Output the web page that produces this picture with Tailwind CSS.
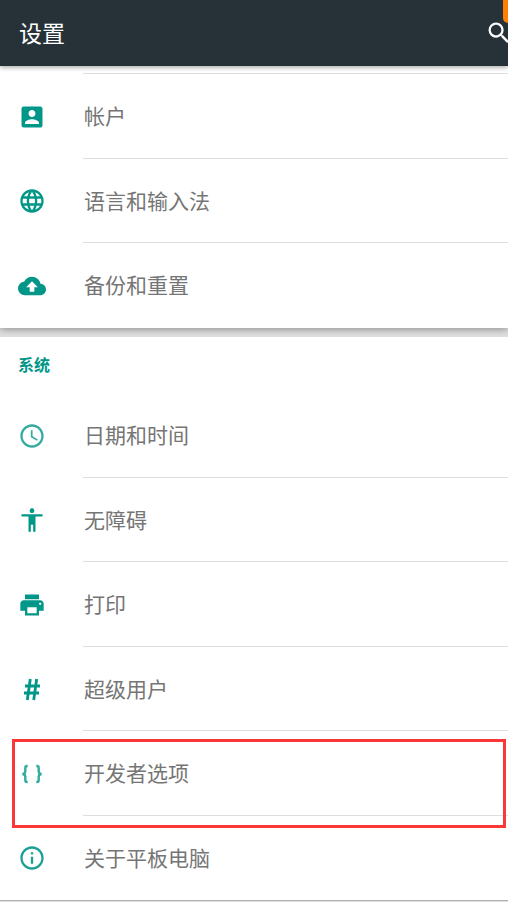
<!DOCTYPE html>
<html lang="zh-CN">
<head>
  <meta charset="UTF-8" />
  <meta name="viewport" content="width=device-width, initial-scale=1.0" />
  <title>设置</title>
  <script src="https://cdn.jsdelivr.net/npm/@tailwindcss/browser@4"></script>
</head>
<body class="bg-[#e0e0e0] font-['Noto_Sans_CJK_SC',sans-serif] text-[#757575] overflow-x-hidden">

  <!-- App bar -->
  <header class="relative z-10 h-[66px] flex items-center justify-between pl-[19px] bg-[#263238] shadow-[0_1px_5px_rgba(0,0,0,0.4)] overflow-x-clip">
    <h1 class="pb-[2px] text-[23px] leading-8 text-white">设置</h1>
    <button type="button" aria-label="搜索" class="-mr-[5px] shrink-0">
      <svg class="w-7 h-7 fill-white" viewBox="0 0 24 24"><path d="M15.500 14h-.79l-.28-.27A6.471 6.471 0 0 0 16 9.500 6.500 6.500 0 1 0 9.500 16c1.610 0 3.090-.59 4.230-1.570l.27.28v.79l5 4.990L20.490 19l-4.990-5zm-6 0C7.010 14 5 11.990 5 9.500S7.010 5 9.500 5 14 7.010 14 9.500 11.990 14 9.500 14z"/></svg>
    </button>
    <span class="absolute top-0 right-0 w-[5px] h-[23px] rounded-bl-[5px] bg-[#ff8000]"></span>
  </header>

  <main>
    <!-- Personal -->
    <section class="bg-white shadow-[0_1px_8px_rgba(0,0,0,0.4)]">
      <div class="h-2 ml-[83px] border-b border-[#dedede]"></div>
      <ul>
        <li class="odd:h-[85px] even:h-[84px]">
          <a href="#" class="h-full flex items-stretch pl-[18px]">
            <svg class="w-7 h-7 mr-[37px] self-center shrink-0 fill-[#009688]" viewBox="0 0 24 24"><path d="M3 5v14a2 2 0 0 0 2 2h14c1.100 0 2-.9 2-2V5c0-1.100-.9-2-2-2H5a2 2 0 0 0-2 2zm12 4c0 1.660-1.340 3-3 3s-3-1.340-3-3 1.340-3 3-3 3 1.340 3 3zm-9 8c0-2 4-3.100 6-3.100s6 1.100 6 3.100v1H6v-1z"/></svg>
            <span class="flex-1 flex items-center pl-px pb-[2px] border-b border-[#dedede] text-[21px] leading-7">帐户</span>
          </a>
        </li>
        <li class="odd:h-[85px] even:h-[84px]">
          <a href="#" class="h-full flex items-stretch pl-[18px]">
            <svg class="w-7 h-7 mr-[37px] self-center shrink-0 fill-[#009688]" viewBox="0 0 24 24"><path d="M11.990 2C6.470 2 2 6.480 2 12s4.470 10 9.990 10C17.520 22 22 17.520 22 12S17.520 2 11.990 2zm6.930 6h-2.950a15.650 15.650 0 0 0-1.380-3.560A8.030 8.030 0 0 1 18.920 8zM12 4.040c.83 1.200 1.480 2.530 1.910 3.960h-3.820c.43-1.430 1.080-2.760 1.910-3.960zM4.260 14C4.100 13.360 4 12.690 4 12s.1-1.360.26-2h3.380c-.08.66-.14 1.320-.14 2s.06 1.340.14 2H4.260zm.82 2h2.950c.32 1.250.78 2.450 1.380 3.560A7.987 7.987 0 0 1 5.080 16zm2.950-8H5.080a7.987 7.987 0 0 1 4.330-3.560A15.650 15.650 0 0 0 8.030 8zM12 19.960c-.83-1.200-1.480-2.530-1.910-3.960h3.820c-.43 1.430-1.080 2.760-1.910 3.960zM14.340 14H9.660c-.09-.66-.16-1.320-.16-2s.07-1.350.16-2h4.680c.09.65.16 1.320.16 2s-.07 1.340-.16 2zm.25 5.560c.6-1.110 1.060-2.310 1.380-3.560h2.950a8.030 8.030 0 0 1-4.330 3.560zM16.360 14c.08-.66.14-1.320.14-2s-.06-1.340-.14-2h3.380c.16.640.26 1.310.26 2s-.1 1.360-.26 2h-3.380z"/></svg>
            <span class="flex-1 flex items-center pl-px pb-[2px] border-b border-[#dedede] text-[21px] leading-7">语言和输入法</span>
          </a>
        </li>
        <li class="odd:h-[85px] even:h-[84px]">
          <a href="#" class="h-full flex items-stretch pl-[18px]">
            <svg class="w-7 h-7 mr-[37px] self-center shrink-0 fill-[#009688]" viewBox="0 0 24 24"><path d="M19.350 10.040A7.490 7.490 0 0 0 12 4C9.110 4 6.600 5.640 5.350 8.040A5.994 5.994 0 0 0 0 14c0 3.310 2.690 6 6 6h13c2.760 0 5-2.240 5-5 0-2.640-2.050-4.780-4.650-4.960zM14 13v4h-4v-4H7l5-5 5 5h-3z"/></svg>
            <span class="flex-1 flex items-center pl-px pb-[3px] text-[21px] leading-7">备份和重置</span>
          </a>
        </li>
      </ul>
    </section>

    <!-- System -->
    <section class="relative mt-[9px] bg-white border-b border-[#b0b0b0]">
      <h2 class="h-14 flex items-center pl-[18px] pb-[2px] text-base font-bold text-[#009688]">系统</h2>
      <ul>
        <li class="odd:h-[85px] even:h-[84px]">
          <a href="#" class="h-full flex items-stretch pl-[18px]">
            <svg class="w-7 h-7 mr-[37px] self-center shrink-0 fill-[#009688]/80" viewBox="0 0 24 24"><path d="M11.990 2C6.470 2 2 6.480 2 12s4.470 10 9.990 10C17.520 22 22 17.520 22 12S17.520 2 11.990 2zM12 20c-4.420 0-8-3.580-8-8s3.580-8 8-8 8 3.580 8 8-3.580 8-8 8zm.5-13H11v6l5.250 3.150.75-1.230-4.500-2.670z"/></svg>
            <span class="flex-1 flex items-center pl-px pb-[2px] border-b border-[#dedede] text-[21px] leading-7">日期和时间</span>
          </a>
        </li>
        <li class="odd:h-[85px] even:h-[84px]">
          <a href="#" class="h-full flex items-stretch pl-[18px]">
            <svg class="w-7 h-7 mr-[37px] self-center shrink-0 fill-[#009688]" viewBox="0 0 24 24"><path d="M12 2c1.100 0 2 .9 2 2s-.9 2-2 2-2-.9-2-2 .9-2 2-2zm9 7h-6v13h-2v-6h-2v6H9V9H3V7h18v2z"/></svg>
            <span class="flex-1 flex items-center pl-px pb-[2px] border-b border-[#dedede] text-[21px] leading-7">无障碍</span>
          </a>
        </li>
        <li class="odd:h-[85px] even:h-[84px]">
          <a href="#" class="h-full flex items-stretch pl-[18px]">
            <svg class="w-7 h-7 mr-[37px] self-center shrink-0 fill-[#009688]" viewBox="0 0 24 24"><path d="M19 8H5c-1.660 0-3 1.340-3 3v6h4v4h12v-4h4v-6c0-1.660-1.340-3-3-3zm-3 11H8v-5h8v5zm3-7c-.55 0-1-.45-1-1s.45-1 1-1 1 .45 1 1-.45 1-1 1zm-1-9H6v4h12V3z"/></svg>
            <span class="flex-1 flex items-center pl-px pb-[2px] border-b border-[#dedede] text-[21px] leading-7">打印</span>
          </a>
        </li>
        <li class="odd:h-[85px] even:h-[84px]">
          <a href="#" class="h-full flex items-stretch pl-[18px]">
            <svg class="w-7 h-7 mr-[37px] self-center shrink-0 fill-none stroke-[#009688] stroke-[2.8]" viewBox="0 0 28 28"><path d="M12.300 4 9.300 25M18.700 4 15.700 25M7 11h15M6 18h15"/></svg>
            <span class="flex-1 flex items-center pl-px pb-[2px] border-b border-[#dedede] text-[21px] leading-7">超级用户</span>
          </a>
        </li>
        <li class="relative odd:h-[85px] even:h-[84px]">
          <a href="#" class="h-full flex items-stretch pl-[18px]">
            <svg class="w-7 h-7 mr-[37px] self-center shrink-0 fill-none stroke-[#009688]/80 stroke-[2.4]" viewBox="0 0 28 28"><path d="M9.700 6H9Q7.300 6 7.300 8v3.200Q7.300 14 4.300 14 7.300 14 7.300 16.800V20q0 2 1.700 2h.7M18.300 6h.7q1.700 0 1.700 2v3.200Q20.700 14 23.700 14 20.700 14 20.700 16.800V20q0 2-1.700 2h-.7"/></svg>
            <span class="flex-1 flex items-center pl-px pb-[2px] border-b border-[#dedede] text-[21px] leading-7">开发者选项</span>
          </a>
          <!-- Highlight frame -->
          <div class="absolute top-2 left-3 right-[2px] h-[89px] border-3 border-[#fb3737] pointer-events-none"></div>
        </li>
        <li class="odd:h-[85px] even:h-[84px]">
          <a href="#" class="h-full flex items-stretch pl-[18px]">
            <svg class="w-7 h-7 mr-[37px] self-center shrink-0 fill-[#009688]/90" viewBox="0 0 24 24"><path d="M11 17h2v-6h-2v6zm1-15C6.480 2 2 6.480 2 12s4.480 10 10 10 10-4.480 10-10S17.520 2 12 2zm0 18c-4.410 0-8-3.590-8-8s3.590-8 8-8 8 3.590 8 8-3.590 8-8 8zM11 9h2V7h-2v2z"/></svg>
            <span class="flex-1 flex items-center pl-px pb-[3px] text-[21px] leading-7">关于平板电脑</span>
          </a>
        </li>
      </ul>
    </section>
  </main>
</body>
</html>
